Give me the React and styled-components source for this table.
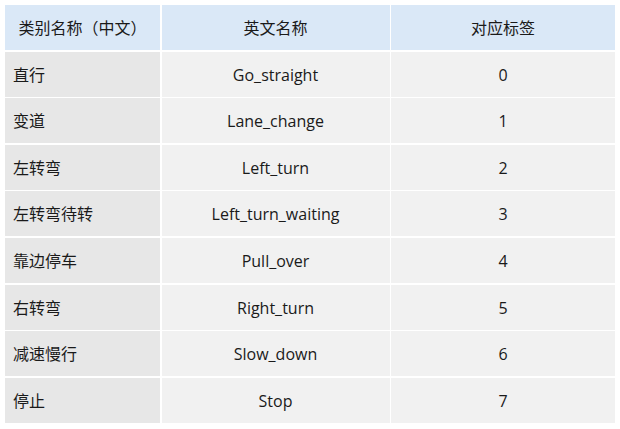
import React from "react";
import styled, { createGlobalStyle } from "styled-components";

const Global = createGlobalStyle`
  html, body { margin: 0; padding: 0; background: #ffffff; }
  body { font-family: "Open Sans", "Noto Sans CJK SC", sans-serif; }
`;

const Page = styled.div`
  padding: 5px;
  width: 610px;
`;

const Table = styled.div`
  display: grid;
  grid-template-columns: 155px 228px 224px;
  grid-auto-rows: 45.1px;
  column-gap: 1.5px;
  row-gap: 1.5px;
  background: #ffffff;
`;

const Cell = styled.div`
  display: flex;
  align-items: center;
  justify-content: ${(p) => (p.$left ? "flex-start" : "center")};
  padding: ${(p) => (p.$left ? "1px 0 0 8px" : "1px 0 0 0")};
  background: ${(p) => (p.$head ? "#DAE8F7" : p.$first ? "#E7E7E7" : "#F1F1F1")};
  color: #1a1a1a;
  font-family: "Open Sans", "Noto Sans CJK SC", sans-serif;
  font-size: 16px;
  line-height: 1;
  white-space: nowrap;
`;

const rows = [
  ["直行", "Go_straight", "0"],
  ["变道", "Lane_change", "1"],
  ["左转弯", "Left_turn", "2"],
  ["左转弯待转", "Left_turn_waiting", "3"],
  ["靠边停车", "Pull_over", "4"],
  ["右转弯", "Right_turn", "5"],
  ["减速慢行", "Slow_down", "6"],
  ["停止", "Stop", "7"],
];

export default function App() {
  return (
    <Page>
      <Global />
      <Table>
        <Cell $head>类别名称（中文）</Cell>
        <Cell $head>英文名称</Cell>
        <Cell $head>对应标签</Cell>
        {rows.map(([cn, en, id]) => (
          <React.Fragment key={id}>
            <Cell $first $left>{cn}</Cell>
            <Cell>{en}</Cell>
            <Cell>{id}</Cell>
          </React.Fragment>
        ))}
      </Table>
    </Page>
  );
}
